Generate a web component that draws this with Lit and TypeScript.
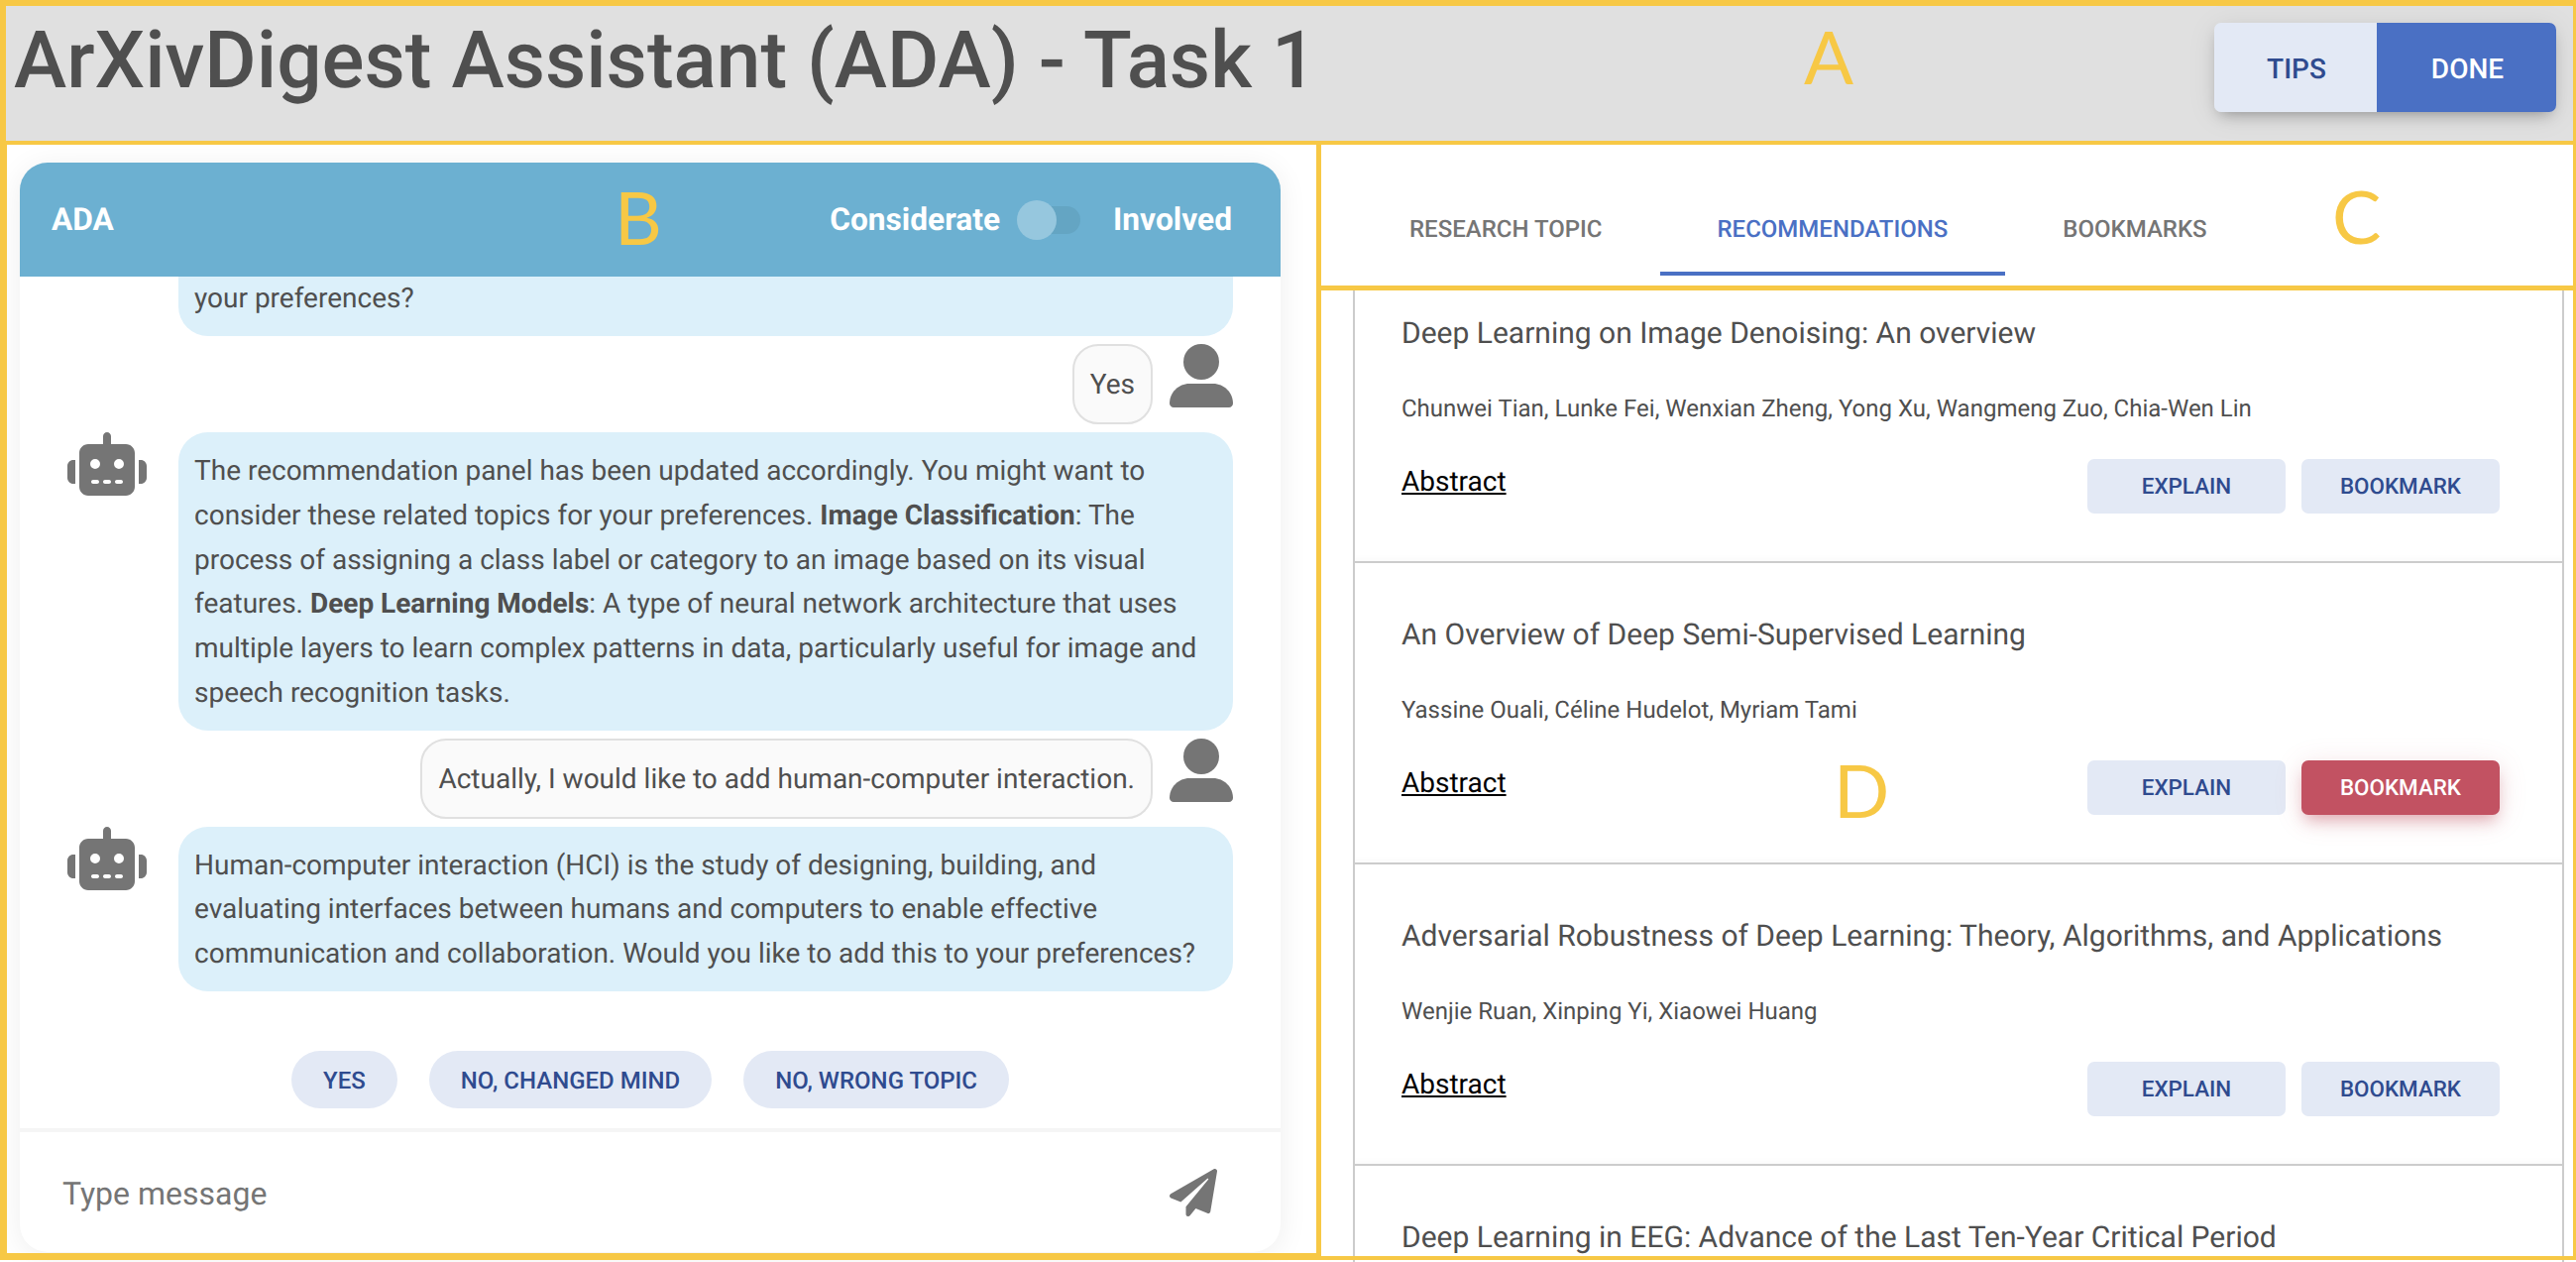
import { css, html, LitElement, svg } from 'lit'
import { customElement } from 'lit/decorators.js'

const ROBOT = svg`<path d="M320 0c17.7 0 32 14.3 32 32V96H472c39.8 0 72 32.2 72 72V440c0 39.8-32.2 72-72 72H168c-39.8 0-72-32.2-72-72V168c0-39.8 32.2-72 72-72H288V32c0-17.7 14.3-32 32-32zM208 384c-8.8 0-16 7.2-16 16s7.2 16 16 16h32c8.8 0 16-7.2 16-16s-7.2-16-16-16H208zm96 0c-8.8 0-16 7.2-16 16s7.2 16 16 16h32c8.8 0 16-7.2 16-16s-7.2-16-16-16H304zm96 0c-8.8 0-16 7.2-16 16s7.2 16 16 16h32c8.8 0 16-7.2 16-16s-7.2-16-16-16H400zM264 256a40 40 0 1 0 -80 0 40 40 0 1 0 80 0zm152 40a40 40 0 1 0 0-80 40 40 0 1 0 0 80zM48 224H64V416H48c-26.5 0-48-21.5-48-48V272c0-26.5 21.5-48 48-48zm544 0c26.5 0 48 21.5 48 48v96c0 26.5-21.5 48-48 48H576V224h16z"/>`

const PLANE = svg`<path d="M476 3.2L12.5 270.6c-18.1 10.4-15.8 35.6 2.2 43.2L121 358.4l287.3-253.2c5.5-4.9 13.3 2.6 8.6 8.3L176 407v80.5c0 23.6 28.5 32.9 42.5 15.8L282 426l124.6 52.2c14.2 6 30.4-2.9 33-18.2l72-432C515 7.8 493.3-6.8 476 3.2z"/>`

const papers = [
  {
    title: 'Deep Learning on Image Denoising: An overview',
    authors: 'Chunwei Tian, Lunke Fei, Wenxian Zheng, Yong Xu, Wangmeng Zuo, Chia-Wen Lin',
    saved: false,
  },
  {
    title: 'An Overview of Deep Semi-Supervised Learning',
    authors: 'Yassine Ouali, Céline Hudelot, Myriam Tami',
    saved: true,
  },
  {
    title: 'Adversarial Robustness of Deep Learning: Theory, Algorithms, and Applications',
    authors: 'Wenjie Ruan, Xinping Yi, Xiaowei Huang',
    saved: false,
  },
  // only the title of this one is on screen, the rest is scrolled away
  {
    title: 'Deep Learning in EEG: Advance of the Last Ten-Year Critical Period',
    authors: '',
    saved: false,
  },
]

@customElement('app-root')
export class AppRoot extends LitElement {
  _bot() {
    return html`<svg class="bot" viewBox="0 0 640 512">${ROBOT}</svg>`
  }

  _user() {
    return html`<svg class="user" viewBox="0 0 64 64">
      <circle cx="32" cy="18" r="18"></circle>
      <path d="M20 40h24c11 0 20 9 20 20c0 2-2 4-4 4H4c-2 0-4-2-4-4c0-11 9-20 20-20z"></path>
    </svg>`
  }

  _chat() {
    return html`
      <section class="chat">
        <header class="chat_head">
          <span>ADA</span>
          <div class="mood">
            <span>Considerate</span>
            <span class="switch"><span class="knob"></span></span>
            <span>Involved</span>
          </div>
        </header>
        <div class="messages">
          <div class="msg">
            <span class="bot_slot"></span>
            <div class="bubble bubble--first">your preferences?</div>
          </div>
          <div class="msg msg--user">
            <div class="bubble bubble--user">Yes</div>
            ${this._user()}
          </div>
          <div class="msg">
            ${this._bot()}
            <div class="bubble">
              The recommendation panel has been updated accordingly. You might
              want to consider these related topics for your preferences.
              <b>Image Classification</b>: The process of assigning a class
              label or category to an image based on its visual features.
              <b>Deep Learning Models</b>: A type of neural network architecture
              that uses multiple layers to learn complex patterns in data,
              particularly useful for image and speech recognition tasks.
            </div>
          </div>
          <div class="msg msg--user">
            <div class="bubble bubble--user">
              Actually, I would like to add human-computer interaction.
            </div>
            ${this._user()}
          </div>
          <div class="msg">
            ${this._bot()}
            <div class="bubble">
              Human-computer interaction (HCI) is the study of designing,
              building, and evaluating interfaces between humans and computers
              to enable effective communication and collaboration. Would you
              like to add this to your preferences?
            </div>
          </div>
        </div>
        <div class="replies">
          <button class="pill">YES</button>
          <button class="pill">NO, CHANGED MIND</button>
          <button class="pill">NO, WRONG TOPIC</button>
        </div>
        <div class="composer">
          <input class="composer_input" type="text" placeholder="Type message" />
          <svg class="send" viewBox="0 0 512 512">${PLANE}</svg>
        </div>
      </section>
    `
  }

  _paper(p: { title: string; authors: string; saved: boolean }) {
    return html`
      <article class="paper">
        <h5 class="paper_title">${p.title}</h5>
        ${p.authors
          ? html`<p class="paper_authors">${p.authors}</p>
              <div class="paper_foot">
                <a class="paper_abstract">Abstract</a>
                <div class="paper_btns">
                  <button class="btn">EXPLAIN</button>
                  <button class="btn ${p.saved ? 'btn--saved' : ''}">BOOKMARK</button>
                </div>
              </div>`
          : ''}
      </article>
    `
  }

  render() {
    return html`
      <div class="topbar">
        <h1 class="topbar_title">ArXivDigest Assistant (ADA) - Task 1</h1>
        <div class="topbar_btns">
          <button class="top_btn">TIPS</button>
          <button class="top_btn top_btn--done">DONE</button>
        </div>
      </div>
      <main class="main">
        <div class="left">${this._chat()}</div>
        <div class="right">
          <nav class="tabs">
            <span class="tab">RESEARCH TOPIC</span>
            <span class="tab tab--on">RECOMMENDATIONS</span>
            <span class="tab">BOOKMARKS</span>
          </nav>
          <div class="list">${papers.map((p) => this._paper(p))}</div>
        </div>
      </main>

      <div class="box box--a"></div>
      <div class="box box--b"></div>
      <div class="box box--c"></div>
      <div class="box box--d"></div>
      <span class="mark mark--a">A</span>
      <span class="mark mark--b">B</span>
      <span class="mark mark--c">C</span>
      <span class="mark mark--d">D</span>
    `
  }

  static styles = css`
    :host {
      display: block;
      position: relative;
      width: 2599px;
      height: 1273px;
      overflow: hidden;
      background: #fff;
      color: #4f4f4f;
      font-family: Roboto, sans-serif;
      font-size: 28px;
      text-rendering: geometricPrecision;
    }
    button {
      border: 0;
      font-family: inherit;
      font-weight: 500;
      padding: 0;
      text-rendering: inherit;
    }

    .topbar {
      display: flex;
      justify-content: space-between;
      height: 146px;
      padding: 23px 20px 0 14px;
      box-sizing: border-box;
      background: #e0e0e0;
    }
    .topbar_title {
      margin: -9px 0 0;
      font-size: 80.2px;
      font-weight: 500;
      line-height: 94px;
      color: #4f4f4f;
    }
    .topbar_btns {
      display: flex;
      height: 90px;
      border-radius: 7px;
      overflow: hidden;
      box-shadow: 0 7px 15px -6px rgba(0, 0, 0, 0.35), 0 4px 30px 0 rgba(0, 0, 0, 0.08);
    }
    .top_btn {
      width: 164px;
      padding: 2px 0 0 2px;
      background: #e3e9f5;
      color: #2f4b8f;
      font-size: 28px;
    }
    .top_btn--done {
      width: 181px;
      background: #4a70c4;
      color: #fff;
    }

    .main {
      display: flex;
      height: 1127px;
    }
    .left {
      width: 1333px;
      box-sizing: border-box;
      padding: 18px 41px 0 20px;
    }
    .right {
      flex: 1;
      display: flex;
      flex-direction: column;
      min-width: 0;
    }

    .chat {
      display: flex;
      flex-direction: column;
      height: 1099px;
      border-radius: 28px;
      background: #fff;
      box-shadow: 0 4px 30px rgba(0, 0, 0, 0.07);
    }
    .chat_head {
      flex: none;
      display: flex;
      align-items: center;
      justify-content: space-between;
      height: 115px;
      padding: 0 49px 0 32px;
      box-sizing: border-box;
      border-radius: 28px 28px 0 0;
      background: #6cb0d1;
      color: #fff;
      font-size: 31.7px;
      font-weight: 700;
    }
    .mood {
      display: flex;
      align-items: center;
    }
    .switch {
      position: relative;
      width: 58px;
      height: 28px;
      margin: 0 33px 0 23px;
      border-radius: 14px;
      background: #64a5c3;
    }
    .knob {
      position: absolute;
      left: -6px;
      top: -6px;
      width: 40px;
      height: 40px;
      border-radius: 50%;
      background: #96c7de;
    }

    .messages {
      flex: 1;
      min-height: 0;
      overflow: hidden;
      display: flex;
      flex-direction: column;
      justify-content: flex-end;
      gap: 8px;
      padding: 0 48px 60px;
    }
    .msg {
      flex: none;
      display: flex;
      align-items: flex-start;
      gap: 32px;
    }
    .msg--user {
      justify-content: flex-end;
      gap: 17px;
    }
    .bot,
    .bot_slot {
      flex: none;
      width: 80px;
      height: 64px;
      fill: #757575;
    }
    .user {
      flex: none;
      width: 64px;
      height: 64px;
      fill: #757575;
    }
    .bubble {
      flex: 1;
      min-width: 0;
      padding: 17px 16px 15px;
      border-radius: 30px;
      background: #dcf0fa;
      line-height: 44.8px;
    }
    .bubble--first {
      padding-top: 80px;
    }
    .bubble--user {
      flex: none;
      border: 2px solid #e0e0e0;
      border-radius: 26px;
      background: #fafafa;
    }

    .replies {
      flex: none;
      display: flex;
      justify-content: center;
      gap: 32px;
      padding-bottom: 20px;
      border-bottom: 4px solid #f5f5f5;
    }
    .pill {
      height: 58px;
      padding: 1px 32px 0;
      border-radius: 29px;
      background: #e3e9f5;
      color: #2f4b8f;
      font-size: 24px;
    }

    .composer {
      flex: none;
      display: flex;
      align-items: center;
      justify-content: space-between;
      height: 121px;
      padding: 2px 64px 0 43px;
      box-sizing: border-box;
    }
    .composer_input {
      flex: 1;
      min-width: 0;
      border: 0;
      outline: none;
      padding: 0;
      background: transparent;
      font-family: inherit;
      font-size: 32px;
      color: #4f4f4f;
      text-rendering: inherit;
    }
    .composer_input::placeholder {
      color: #757575;
      opacity: 1;
    }
    .send {
      flex: none;
      width: 48px;
      height: 48px;
      margin-top: -2px;
      fill: #757575;
    }

    .tabs {
      flex: none;
      display: flex;
      height: 147px;
      box-sizing: border-box;
      padding: 0 0 15px 31px;
      align-items: flex-end;
    }
    .tab {
      padding: 0 58px 27px;
      border-bottom: 4px solid transparent;
      color: #757575;
      font-size: 24px;
      font-weight: 500;
      line-height: 32px;
    }
    .tab--on {
      border-bottom-color: #4a70c4;
      color: #4a70c4;
    }

    .list {
      flex: 1;
      min-height: 0;
      overflow: hidden;
      margin: 0 12px 0 32px;
      border-left: 2px solid #ccc;
      border-right: 2px solid #ccc;
    }
    .paper {
      height: 304px;
      padding: 53px 63px 0 47px;
      box-sizing: border-box;
      border-bottom: 2px solid #ccc;
      box-shadow: inset 0 -10px 10px -10px rgba(0, 0, 0, 0.04);
    }
    .paper:first-child {
      height: 275px;
      padding-top: 24px;
    }
    .paper:last-child {
      border-bottom: 0;
      box-shadow: none;
    }
    .paper_title {
      margin: 0;
      font-size: 30px;
      font-weight: 400;
      line-height: 40px;
    }
    .paper_authors {
      margin: 36px 0 32px;
      font-size: 24px;
      line-height: 38px;
    }
    .paper_foot {
      display: flex;
      align-items: flex-start;
      justify-content: space-between;
    }
    .paper_abstract {
      color: #000;
      line-height: 46px;
      text-decoration: underline;
    }
    .paper_btns {
      display: flex;
      gap: 16px;
    }
    .btn {
      width: 200px;
      height: 55px;
      border-radius: 7px;
      background: #e3e9f5;
      color: #2f4b8f;
      font-size: 22.4px;
    }
    .btn--saved {
      background: #c25262;
      color: #fff;
      box-shadow: 0 9px 16px -4px rgba(194, 82, 98, 0.45), 0 4px 30px 0 rgba(194, 82, 98, 0.14);
    }

    .box {
      position: absolute;
      box-sizing: border-box;
      border: 0 solid #f7c845;
      pointer-events: none;
    }
    .box--a {
      left: 0;
      top: 0;
      width: 2599px;
      height: 146px;
      border-width: 6px 3px 4px 6px;
    }
    .box--b {
      left: 0;
      top: 142px;
      width: 1333px;
      height: 1129px;
      border-width: 4px 5px 7px 7px;
    }
    .box--c {
      left: 1328px;
      top: 142px;
      width: 1271px;
      height: 151px;
      border-width: 4px 3px 5px 5px;
    }
    .box--d {
      left: 1328px;
      top: 288px;
      width: 1271px;
      height: 983px;
      border-width: 5px 3px 4px 5px;
    }
    .mark {
      position: absolute;
      color: #f7c845;
      font-family: Lato, sans-serif;
      font-size: 74px;
      line-height: 74px;
    }
    .mark--a {
      left: 1820px;
      top: 20px;
    }
    .mark--b {
      left: 620px;
      top: 182px;
    }
    .mark--c {
      left: 2353px;
      top: 181px;
    }
    .mark--d {
      left: 1850px;
      top: 760px;
    }
  `
}
